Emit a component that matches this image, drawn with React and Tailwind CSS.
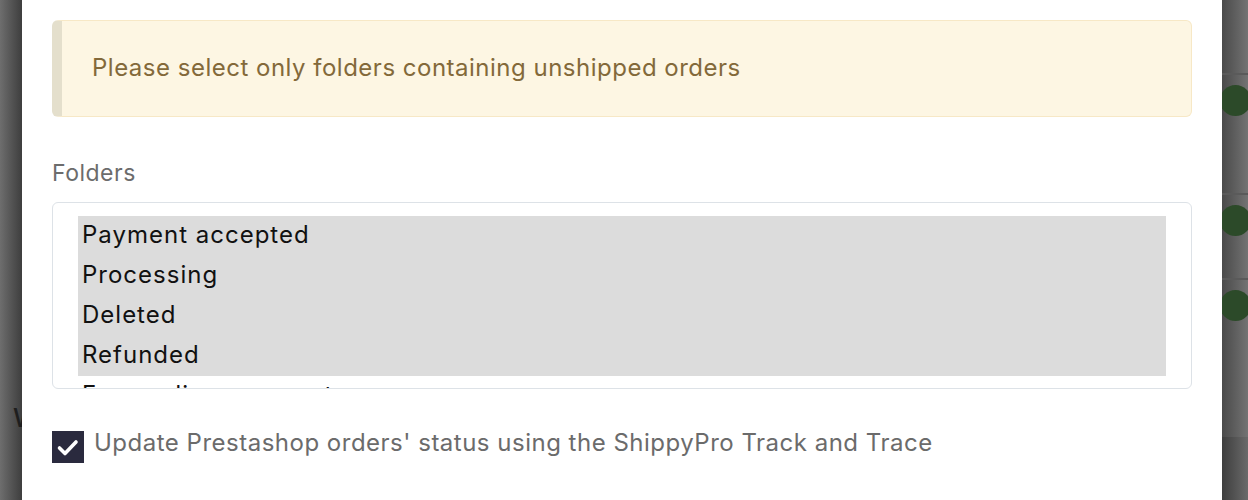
import React from 'react';

const FOLDERS = ['Payment accepted', 'Processing', 'Deleted', 'Refunded', 'Forwarding payment'];
const SELECTED = ['Payment accepted', 'Processing', 'Deleted', 'Refunded'];

function Dot() {
  return <div className="w-[31px] h-[31px] rounded-full bg-[#2c4a29] ml-[-2px]" />;
}

function RightBackdrop() {
  return (
    <div className="w-[26px] h-[500px] overflow-hidden flex flex-col">
      <div className="h-[437px] flex flex-col bg-gradient-to-r from-[#4a4a4a] to-[#737373]">
        <div className="h-[75px] border-b-2 border-[#5a5a5a]" />
        <div className="h-[120px] border-b-2 border-[#5a5a5a] pt-[10px]">
          <Dot />
        </div>
        <div className="h-[85px] border-b-2 border-[#5a5a5a] pt-[10px]">
          <Dot />
        </div>
        <div className="pt-[10px]">
          <Dot />
        </div>
      </div>
      <div className="flex-1 bg-gradient-to-r from-[#3e3e3e] to-[#6a6a6a]" />
    </div>
  );
}

function LeftBackdrop() {
  return (
    <div className="w-[22px] h-[500px] overflow-hidden bg-gradient-to-r from-[#6e6e6e] to-[#3e3e3e]">
      <div className="pt-[403px] pl-[13px] text-[26px] leading-[30px] text-[#1e1e1e] font-medium whitespace-nowrap">
        W
      </div>
    </div>
  );
}

export default function App() {
  return (
    <div
      className="flex w-[1248px] h-[500px] overflow-hidden bg-white"
      style={{ fontFamily: 'Inter, "Noto Sans", sans-serif' }}
    >
      <LeftBackdrop />
      <div className="w-[1200px] h-[500px] bg-white px-[30px] pt-[20px]">
        <div className="h-[97px] rounded-[6px] border border-[#f7e8c6] border-l-[10px] border-l-[#e4dfcc] bg-[#fdf6e3] flex items-center pl-[30px]">
          <span className="text-[24px] leading-[30px] tracking-[0.5px] text-[#83693a] mt-[-1px]">
            Please select only folders containing unshipped orders
          </span>
        </div>
        <div className="mt-[40px] text-[23px] leading-[32px] tracking-[0.5px] text-[#6c6c6c]">Folders</div>
        <div className="mt-[13px] h-[187px] rounded-[6px] border border-[#dde2e7] pt-[13px] px-[25px] overflow-hidden">
          {FOLDERS.map((f) => (
            <div
              key={f}
              className={`h-[40px] pl-[4px] flex items-center text-[24px] tracking-[1px] text-[#111] whitespace-nowrap ${
                SELECTED.includes(f) ? 'bg-[#dcdcdc]' : ''
              }`}
            >
              <span className="mt-[-3px]">{f}</span>
            </div>
          ))}
        </div>
        <div className="mt-[42px] flex items-start gap-[10px]">
          <div className="w-[32px] h-[32px] bg-[#2a2a3e] flex items-center justify-center">
            <svg width="32" height="32" viewBox="0 0 32 32">
              <polyline
                points="7.5,17 13,22.5 24,11"
                fill="none"
                stroke="white"
                strokeWidth="3.6"
                strokeLinecap="round"
                strokeLinejoin="round"
              />
            </svg>
          </div>
          <span className="text-[24px] leading-[24px] tracking-[0.5px] text-[#6b6b6b]">
            Update Prestashop orders' status using the ShippyPro Track and Trace
          </span>
        </div>
      </div>
      <RightBackdrop />
    </div>
  );
}
